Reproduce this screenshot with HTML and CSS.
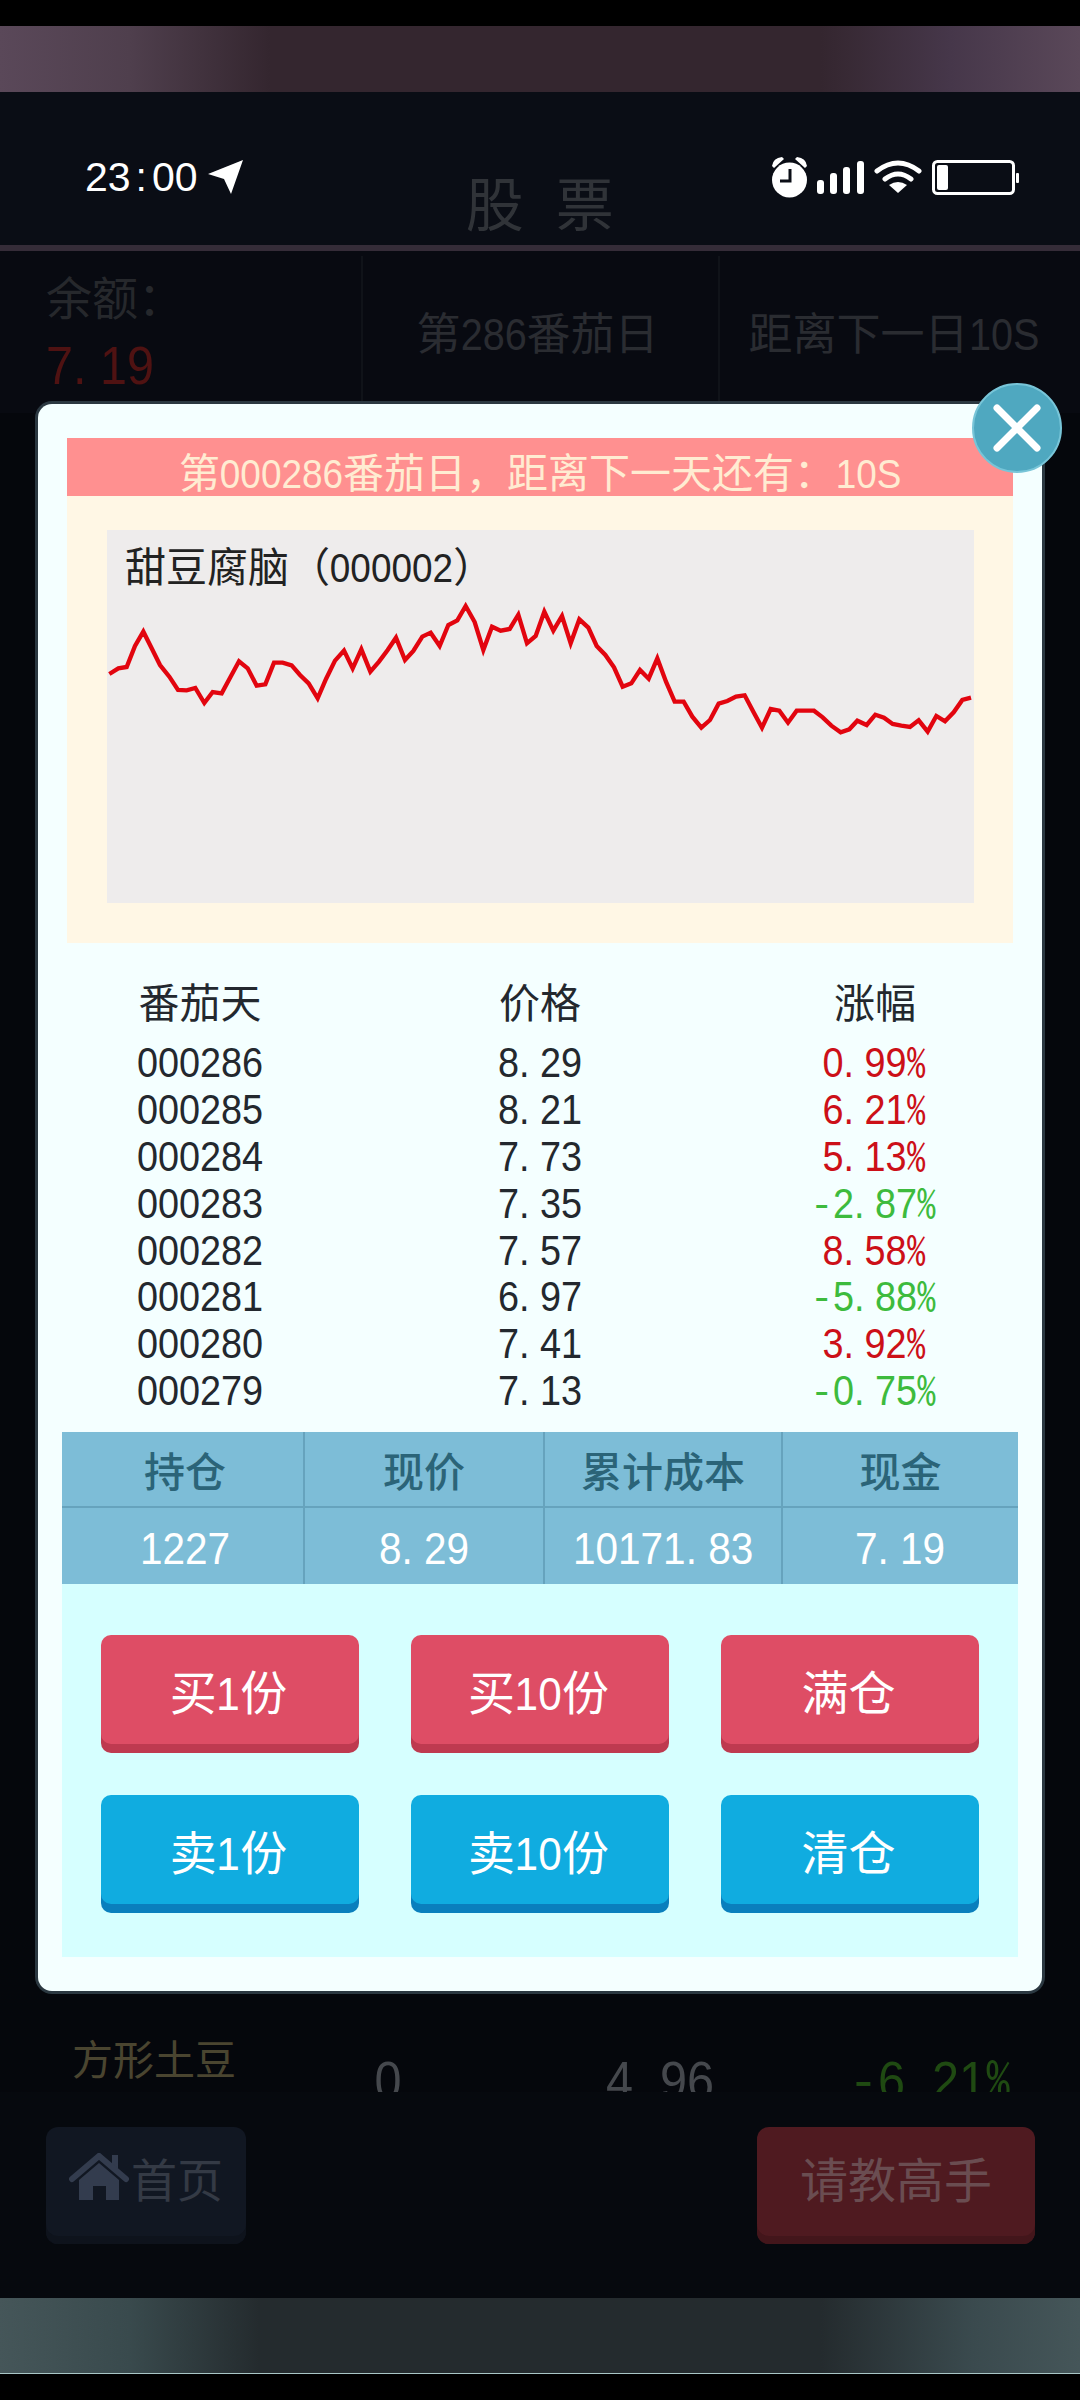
FILE: index.html
```html
<!DOCTYPE html>
<html lang="zh-CN">
<head>
  <meta charset="UTF-8">
  <meta name="viewport" content="width=device-width, initial-scale=1.0">
  <title>股票</title>
  <link rel="stylesheet" href="styles.css">
</head>
<body>

  <div class="screen">
    <div class="bar-black-top"></div>
    <div class="band band-top"></div>

    <header class="header">
      <div class="status">
        <div class="status-left">
          <span class="clock">23<span class="colon">:</span>00</span>
          <svg class="ico-nav" viewBox="0 0 36 36"><polygon points="35,1 0,15 16,20 23,35" fill="#fff"/></svg>
        </div>
        <div class="status-right">
          <svg class="ico-alarm" viewBox="0 0 37 42">
            <path d="M1 10 Q2 2 11 1 L13 3 L3 12Z M36 10 Q35 2 26 1 L24 3 L34 12Z" fill="#fff"/>
            <circle cx="18.500" cy="24" r="17.500" fill="#fff"/>
            <path d="M19 13 V25 H9" fill="none" stroke="#0b0e16" stroke-width="3"/>
          </svg>
          <svg class="ico-signal" viewBox="0 0 47 33">
            <rect x="0" y="19" width="7" height="14" rx="3" fill="#fff"/>
            <rect x="13" y="12" width="7" height="21" rx="3" fill="#fff"/>
            <rect x="26" y="6" width="7" height="27" rx="3" fill="#fff"/>
            <rect x="40" y="0" width="7" height="33" rx="3" fill="#fff"/>
          </svg>
          <svg class="ico-wifi" viewBox="0 0 48 34">
            <path d="M3 11 Q24 -5 45 11 M11 19 Q24 9 37 19" fill="none" stroke="#fff" stroke-width="5" stroke-linecap="round"/>
            <path d="M24 33 L15 25 Q24 19 33 25Z" fill="#fff"/>
          </svg>
          <svg class="ico-battery" viewBox="0 0 87 35">
            <rect x="1.500" y="1.500" width="80" height="32" rx="4" fill="none" stroke="#fff" stroke-width="3"/>
            <rect x="5" y="5" width="11" height="25" rx="2" fill="#fff"/>
            <rect x="84" y="13" width="3" height="10" rx="1" fill="#fff"/>
          </svg>
        </div>
      </div>
      <h1 class="title">股 票</h1>
    </header>
    <div class="header-line"></div>

    <div class="info">
      <div class="info-cell balance">
        <div class="balance-label">余额：</div>
        <div class="balance-value num">7<span class="dot">.</span>19</div>
      </div>
      <div class="info-cell info-text"><span>第<span class="num fit fit-3">286</span>番茄日</span></div>
      <div class="info-cell info-text"><span>距离下一日<span class="num fit fit-3">10S</span></span></div>
    </div>

    <div class="list">
      <div class="list-head"></div>
      <div class="list-row">
        <span class="list-name">方形土豆</span>
        <span class="list-num num">0</span>
        <span class="list-num num">4<span class="dot">.</span>96</span>
        <span class="list-num num fall"><span class="hw">-</span>6<span class="dot">.</span>21<span class="hw">%</span></span>
      </div>
    </div>

    <footer class="footer">
      <div class="foot-btn foot-home">
        <svg class="ico-home" viewBox="0 0 60 48">
          <rect x="43" y="2" width="6" height="16" fill="#333c4e"/>
          <polyline points="3,26 30,3 57,26" fill="none" stroke="#333c4e" stroke-width="6" stroke-linecap="round"/>
          <path d="M10 27 L30 10 L50 27 V47 H37 V33 H24 V47 H10Z" fill="#333c4e"/>
        </svg>
        <span>首页</span>
      </div>
      <div class="foot-btn foot-ask">请教高手</div>
    </footer>

    <div class="band band-bottom"></div>
  </div>

  <!-- the dialog on top of the dimmed page -->
  <div class="modal">
    <button class="close">
      <svg viewBox="0 0 48 48"><path d="M4 4 L44 44 M44 4 L4 44" stroke="#fff" stroke-width="7" stroke-linecap="round"/></svg>
    </button>

    <div class="notice">第<span class="num fit fit-6">000286</span>番茄日，距离下一天还有：<span class="num fit fit-3">10S</span></div>
    <div class="chart-wrap">
      <div class="chart">
        <div class="chart-title">甜豆腐脑（<span class="num fit fit-6">000002</span>）</div>
        <svg class="chart-line" viewBox="141 30 2598 1119" preserveAspectRatio="none">
          <polyline fill="none" stroke="#e2050f" stroke-width="13" stroke-linejoin="miter" points="
            148,462 175,445 200,441 225,378 250,335 275,385 300,435 328,470 354,510 380,511
            406,504 433,549 458,516 485,520 511,472 537,424 563,445 590,497 616,493 642,428
            668,428 695,436 720,465 746,490 773,535 798,477 825,422 852,392 878,445 904,388
            931,455 957,425 983,390 1008,353 1035,420 1060,393 1087,350 1112,338 1139,378 1165,315
            1192,301 1217,258 1244,306 1270,390 1296,320 1322,332 1349,327 1375,284 1401,370 1427,348
            1453,275 1480,332 1506,288 1532,370 1558,298 1585,323 1610,378 1636,405 1662,442 1688,500
            1714,490 1740,450 1766,476 1792,415 1818,485 1844,545 1871,545 1897,590 1924,623 1950,600
            1976,551 2002,543 2028,530 2054,526 2080,575 2106,623 2132,567 2158,572 2184,608 2210,572
            2236,572 2262,572 2288,592 2314,617 2342,637 2368,628 2392,602 2420,615 2446,584 2472,593
            2498,612 2524,617 2550,621 2576,601 2603,635 2629,588 2655,604 2681,577 2707,540 2733,533"/>
        </svg>
      </div>
    </div>

    <div class="quotes">
      <div class="quote-row quote-head"><span>番茄天</span><span>价格</span><span>涨幅</span></div>
      <div class="quote-row num"><span>000286</span><span>8<span class="dot">.</span>29</span><span class="rise">0<span class="dot">.</span>99<span class="hw">%</span></span></div>
      <div class="quote-row num"><span>000285</span><span>8<span class="dot">.</span>21</span><span class="rise">6<span class="dot">.</span>21<span class="hw">%</span></span></div>
      <div class="quote-row num"><span>000284</span><span>7<span class="dot">.</span>73</span><span class="rise">5<span class="dot">.</span>13<span class="hw">%</span></span></div>
      <div class="quote-row num"><span>000283</span><span>7<span class="dot">.</span>35</span><span class="fall"><span class="hw">-</span>2<span class="dot">.</span>87<span class="hw">%</span></span></div>
      <div class="quote-row num"><span>000282</span><span>7<span class="dot">.</span>57</span><span class="rise">8<span class="dot">.</span>58<span class="hw">%</span></span></div>
      <div class="quote-row num"><span>000281</span><span>6<span class="dot">.</span>97</span><span class="fall"><span class="hw">-</span>5<span class="dot">.</span>88<span class="hw">%</span></span></div>
      <div class="quote-row num"><span>000280</span><span>7<span class="dot">.</span>41</span><span class="rise">3<span class="dot">.</span>92<span class="hw">%</span></span></div>
      <div class="quote-row num"><span>000279</span><span>7<span class="dot">.</span>13</span><span class="fall"><span class="hw">-</span>0<span class="dot">.</span>75<span class="hw">%</span></span></div>
    </div>

    <div class="holdings">
      <div class="hold-cell hold-head">持仓</div>
      <div class="hold-cell hold-head">现价</div>
      <div class="hold-cell hold-head">累计成本</div>
      <div class="hold-cell hold-head">现金</div>
      <div class="hold-cell num"><span>1227</span></div>
      <div class="hold-cell num"><span>8<span class="dot">.</span>29</span></div>
      <div class="hold-cell num"><span>10171<span class="dot">.</span>83</span></div>
      <div class="hold-cell num"><span>7<span class="dot">.</span>19</span></div>
    </div>

    <div class="trade">
      <div class="trade-btn buy"><span>买<span class="num fit fit-1">1</span>份</span></div>
      <div class="trade-btn buy"><span>买<span class="num fit fit-2">10</span>份</span></div>
      <div class="trade-btn buy">满仓</div>
      <div class="trade-btn sell"><span>卖<span class="num fit fit-1">1</span>份</span></div>
      <div class="trade-btn sell"><span>卖<span class="num fit fit-2">10</span>份</span></div>
      <div class="trade-btn sell">清仓</div>
    </div>
  </div>

</body>
</html>
```

FILE: styles.css
```css
* { box-sizing: border-box; }
html, body { margin: 0; padding: 0; }
body {
  width: 1080px;
  height: 2400px;
  overflow: hidden;
  position: relative;
  background: #000;
  font-family: "Noto Sans CJK SC", "Noto Sans", sans-serif;
  font-weight: 400;
}

/* digits in the app are narrow and sit in half-width cells */
.num { font-family: "Liberation Sans", "Noto Sans CJK SC", sans-serif; }
.dot { letter-spacing: 0.278em; }
.hw {
  font-family: "Noto Sans CJK SC", sans-serif;
  font-feature-settings: "hwid";
  line-height: 0;
  letter-spacing: 0.05em;
}
.fit { display: inline-block; line-height: 1; transform: scaleX(0.9); }
.fit-1 { margin: 0 -0.028em; }
.fit-2 { margin: 0 -0.056em; }
.fit-3 { margin: 0 -0.085em; }
.fit-6 { margin: 0 -0.167em; }

.screen { display: flex; flex-direction: column; height: 2400px; }
.bar-black-top { height: 26px; background: #000; }
.band { flex: none; }
.band-top {
  height: 66px;
  background: linear-gradient(90deg, #5a4859 0%, #4f3f4d 12%, #34262f 25%, #34262f 76%, #46374a 88%, #5a4859 100%);
}
.band-bottom {
  height: 76px;
  margin-bottom: 26px;
  border-bottom: 1px solid #a9c6c6;
  background: linear-gradient(90deg, #455659 0%, #394a4d 12%, #242b2e 24%, #242b2e 76%, #3a4a4e 90%, #455659 100%);
}

.header {
  position: relative;
  flex: none;
  height: 153px;
  background: #0a0d15;
  display: flex;
  justify-content: center;
  align-items: flex-end;
  padding: 0 0 12px 9px;
}
.title {
  margin: 0;
  font-size: 58px;
  line-height: 64px;
  font-weight: 400;
  letter-spacing: 9.500px;
  color: #303338;
  white-space: pre;
}
.status {
  position: absolute;
  top: 62px;
  left: 85px;
  right: 61px;
  display: flex;
  justify-content: space-between;
  align-items: center;
  height: 46px;
}
.status-left, .status-right { display: flex; align-items: center; }
.clock {
  font-family: "Liberation Sans", sans-serif;
  font-size: 41px;
  line-height: 46px;
  color: #fff;
}
.colon { margin: 0 5px; }
.ico-nav { width: 36px; height: 36px; margin-left: 10px; }
.ico-alarm { width: 37px; height: 42px; }
.ico-signal { width: 47px; height: 33px; margin-left: 9px; }
.ico-wifi { width: 48px; height: 34px; margin-left: 10px; }
.ico-battery { width: 87px; height: 35px; margin-left: 10px; }

.header-line { flex: none; height: 6px; background: #352c38; }

.info {
  flex: none;
  height: 162px;
  background: #080a11;
  display: grid;
  grid-template-columns: 361px 357px 362px;
}
.info-cell { border-left: 2px solid #101319; margin: 5px 0 9px; }
.info-cell.balance { border-left: 0; padding: 14px 0 0 46px; }
.balance-label { font-size: 46px; line-height: 50px; color: #26282c; }
.balance-value {
  font-size: 54px;
  line-height: 70px;
  margin-top: 10px;
  color: #4f1212;
  transform: scaleX(0.9);
  transform-origin: left center;
}
.info-text {
  display: flex;
  justify-content: center;
  align-items: center;
  font-size: 44px;
  color: #2a2c31;
  padding: 2px 6px 0 0;
}
.info-text:last-child { padding-right: 12px; }

.list {
  flex: 1;
  min-height: 0;
  display: flex;
  flex-direction: column;
  justify-content: space-between;
  overflow: hidden;
  background: #2a2530;
  padding-top: 5px;
}
.list-head {
  height: 84px;
  flex: none;
  background: #05070c;
  border-radius: 14px 14px 0 0;
  border-bottom: 1px solid #12141a;
  margin: 0 3px;
}
.list-row {
  flex: none;
  height: 80px;
  margin-bottom: -8px;
  display: grid;
  grid-template-columns: 252px 272px 272px 272px;
  box-shadow: 0 -2000px 0 2000px #05070c;
  background: #05070c;
  white-space: nowrap;
}
.list-name {
  padding-left: 72px;
  font-size: 41px;
  line-height: 74px;
  color: #4a4530;
}
.list-num {
  text-align: center;
  font-size: 54px;
  line-height: 80px;
  margin-top: 20px;
  color: #45484d;
  transform: scaleX(0.9);
}
.list-num.fall { color: #1f4a12; }

.footer {
  flex: none;
  height: 206px;
  background: #06090e;
  display: flex;
  justify-content: space-between;
  padding: 35px 45px 0 46px;
}
.foot-btn {
  height: 117px;
  border-radius: 12px;
  display: flex;
  align-items: center;
  justify-content: center;
  padding-bottom: 18px;
}
.foot-home { width: 200px; background: #111722; box-shadow: inset 0 -8px 0 #0e131c; color: #343a45; font-size: 46px; }
.ico-home { width: 60px; height: 48px; margin-right: 2px; }
.foot-ask { width: 278px; background: #4f1a20; box-shadow: inset 0 -8px 0 #43161b; color: #6a4d51; font-size: 48px; }

/* dialog */
.modal {
  position: absolute;
  left: 38px;
  top: 404px;
  width: 1004px;
  height: 1587px;
  padding-top: 34px;
  background: #f4ffff;
  border-radius: 14px;
  box-shadow: 0 0 0 3px #2b3841;
}
.close {
  position: absolute;
  left: 934px;
  top: -21px;
  width: 90px;
  height: 90px;
  padding: 0;
  border: 2px solid #78c5d8;
  border-radius: 50%;
  background: #4fa8c0;
  display: flex;
  align-items: center;
  justify-content: center;
}
.close svg { width: 48px; height: 48px; }

.notice {
  height: 58px;
  margin: 0 29px;
  padding-top: 6px;
  background: #ff9090;
  color: #ffecd2;
  font-size: 41px;
  line-height: 52px;
  text-align: center;
}
.chart-wrap {
  height: 447px;
  margin: 0 29px;
  padding: 34px 39px 0 40px;
  background: #fff7e5;
}
.chart {
  height: 373px;
  background: #eeecec;
  display: grid;
}
.chart-title, .chart-line { grid-area: 1 / 1; }
.chart-title {
  padding: 9px 0 0 18px;
  font-size: 41px;
  line-height: 50px;
  color: #222;
}
.chart-line { width: 866px; height: 373px; }

.quotes { margin-top: 39px; }
.quote-row {
  display: grid;
  grid-template-columns: 324px 356px 314px;
  height: 46.900px;
  font-size: 42px;
  line-height: 46.900px;
  text-align: center;
  color: #23282e;
}
.quote-row.num > span { transform: scaleX(0.9); }
.quote-head {
  height: 58px;
  line-height: 36px;
  font-size: 41px;
}
.rise { color: #cc1018; }
.fall { color: #3dbb3d; }

.holdings {
  margin: 17px 24px 0;
  height: 152px;
  display: grid;
  grid-template-columns: 241px 240px 238px 237px;
  grid-template-rows: 76px 76px;
  background: #7dbdd7;
}
.hold-cell {
  display: flex;
  align-items: center;
  justify-content: center;
  border-left: 2px solid #66a3bd;
  font-size: 45px;
  padding-top: 6px;
  color: #fff;
}
.hold-cell.num > span { transform: scaleX(0.9); }
.hold-cell:nth-child(4n+1) { border-left: 0; padding-left: 5px; }
.hold-head {
  border-bottom: 2px solid #66a3bd;
  font-size: 41px;
  font-weight: 500;
  padding-top: 0;
  color: #2b6478;
}

.trade {
  margin: 0 24px;
  height: 373px;
  padding: 51px 39px 0;
  background: #d6ffff;
  display: grid;
  grid-template-columns: repeat(3, 258px);
  grid-template-rows: 109px 109px;
  column-gap: 52px;
  row-gap: 51px;
}
.trade-btn {
  border-radius: 10px;
  display: flex;
  align-items: center;
  justify-content: center;
  padding-right: 3px;
  font-size: 47px;
  color: #fff;
}
.buy { background: #de4d65; box-shadow: 0 9px 0 #be3a50; }
.sell { background: #10ace0; box-shadow: 0 9px 0 #0a7fbd; }
```
